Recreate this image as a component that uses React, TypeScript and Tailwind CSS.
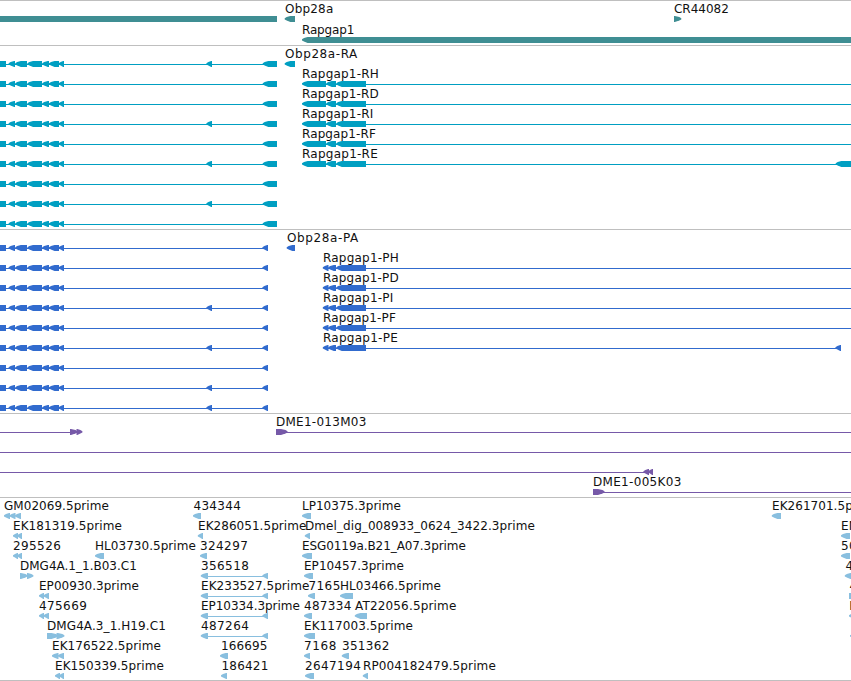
import React from "react";

type Dir = "l" | "r" | "n";
type Exon = [number, number, Dir?];
type Label = [string, number, number];
interface Row {
  labels?: Label[];
  lines?: [number, number][];
  exons?: Exon[];
}

const GENE = "#3f8e93";
const RNA = "#009fc2";
const CDS = "#316bce";
const BAC = "#7659a8";
const EST = "#89bfdf";

function Glyph({ x1, x2, dir, top }: { x1: number; x2: number; dir: Dir; top: number }) {
  if (dir === "n") return <rect x={x1} y={top} width={x2 - x1} height={6} />;
  const head = Math.min(dir === "r" ? 6.5 : 5.6, x2 - x1 - 0.8);
  const s = dir === "l" ? 1 : -1;
  const tip = dir === "l" ? x1 : x2;
  const end = dir === "l" ? x2 : x1;
  const pts = [
    [tip, top + 2.3],
    [tip + s * 2, top + 1.1],
    [tip + s * head, top],
    [end, top],
    [end, top + 6],
    [tip + s * head, top + 6],
    [tip + s * 2, top + 4.6],
    [tip, top + 3.4],
  ];
  return <polygon points={pts.map((p) => p.join(",")).join(" ")} />;
}

function Track({ rows, color, height, pitch = 20 }: { rows: Row[]; color: string; height: number; pitch?: number }) {
  return (
    <section className="border-t border-[#bfbfbf]">
      <svg width={851} height={height} className="block overflow-hidden" fill={color}>
        {rows.map((row, i) => {
          const y = i * pitch;
          return (
            <g key={i}>
              {row.lines?.map(([a, b], k) => (
                <rect key={k} x={a} y={y + 18} width={b - a} height={1} />
              ))}
              {row.exons?.map(([a, b, d], k) => (
                <Glyph key={k} x1={a} x2={b} dir={d ?? "l"} top={y + 15} />
              ))}
              {row.labels?.map(([t, a, b]) => (
                <text key={t} x={a - 0.5} y={y + 12} textLength={b - a + 0.8} fill="#111" className="text-[12px]">
                  {t}
                </text>
              ))}
            </g>
          );
        })}
      </svg>
    </section>
  );
}

const leftExons: Exon[] = [[0, 6, "n"], [8.6, 15], [15.2, 27], [27.4, 42], [42.2, 49], [49, 59], [58.6, 64]];

const genes: Row[] = [
  {
    labels: [["Obp28a", 285.5, 333], ["CR44082", 674.5, 728.5]],
    exons: [[0, 277, "n"], [284.7, 295], [674, 681.3, "r"]],
  },
  { labels: [["Rapgap1", 302.5, 354]], exons: [[302, 860]] },
];

const rnaLabels: Label[] = [
  ["Obp28a-RA", 285.5, 357],
  ["Rapgap1-RH", 302.5, 378.5],
  ["Rapgap1-RD", 302.5, 378.5],
  ["Rapgap1-RI", 302.5, 373],
  ["Rapgap1-RF", 302.5, 375.5],
  ["Rapgap1-RE", 302.5, 377.5],
];

const rnas: Row[] = Array.from({ length: 9 }, (_, i) => {
  const exons: Exon[] = [...leftExons, [262.7, 277]];
  const lines: [number, number][] = [[0, 270]];
  if ([0, 3, 5, 7].includes(i)) exons.push([206.4, 212]);
  if (i === 0) exons.push([284.7, 295]);
  if (i >= 1 && i <= 5) {
    exons.push([302, 326], [326.2, 336], [336.2, 366]);
    lines.push([310, 851]);
  }
  if (i === 5) exons.push([835.7, 860]);
  return { labels: rnaLabels[i] ? [rnaLabels[i]] : [], lines, exons };
});

const cdsLabels: Label[] = [
  ["Obp28a-PA", 287.5, 358],
  ["Rapgap1-PH", 323.5, 398.5],
  ["Rapgap1-PD", 323.5, 398.5],
  ["Rapgap1-PI", 323.5, 393],
  ["Rapgap1-PF", 323.5, 395.5],
  ["Rapgap1-PE", 323.5, 397.5],
];

const proteins: Row[] = Array.from({ length: 9 }, (_, i) => {
  const exons: Exon[] = [...leftExons, [262.4, 268]];
  const lines: [number, number][] = [[0, 265]];
  if ([3, 5, 7, 8].includes(i)) exons.push([206.4, 212]);
  if (i === 0) exons.push([286.7, 295]);
  if (i >= 1 && i <= 5) {
    exons.push([322.8, 328.5], [328.2, 336], [336.2, 366]);
    lines.push([326, i === 5 ? 838 : 851]);
  }
  if (i === 5) exons.push([835.4, 841]);
  return { labels: cdsLabels[i] ? [cdsLabels[i]] : [], lines, exons };
});

const bacs: Row[] = [
  {
    labels: [["DME1-013M03", 276.5, 366]],
    lines: [[0, 78], [280, 851]],
    exons: [[70, 77.5, "r"], [76.5, 82.4, "r"], [276, 287.5, "r"]],
  },
  { lines: [[0, 851]] },
  { lines: [[0, 650]], exons: [[643.4, 649], [648, 653]] },
  { labels: [["DME1-005K03", 593.5, 681]], lines: [[598, 851]], exons: [[593, 604.5, "r"]] },
];

const ests: Row[] = [
  {
    labels: [["GM02069.5prime", 4.5, 108.5], ["434344", 194, 240.5], ["LP10375.3prime", 302.5, 400.5], ["EK261701.5prime", 772.5, 880]],
    exons: [[4, 10], [9.6, 15.5], [15, 21], [193, 201], [302, 311], [771.8, 781]],
  },
  {
    labels: [["EK181319.5prime", 13.5, 121.5], ["EK286051.5prime", 198.5, 306], ["Dmel_dig_008933_0624_3422.3prime", 305.5, 534.5], ["EN09273.5prime", 841.5, 945]],
    exons: [[13, 18], [17, 22], [197.8, 203], [304.8, 310], [841, 850]],
  },
  {
    labels: [["295526", 13.5, 60.5], ["HL03730.5prime", 95.5, 195.5], ["324297", 200.5, 247.5], ["ESG0119a.B21_A07.3prime", 302.5, 465.5], ["500912", 841.5, 888.5]],
    exons: [[13, 18], [17, 22], [95, 104], [200, 207], [302, 312], [841, 850]],
  },
  {
    labels: [["DMG4A.1_1.B03.C1", 20.5, 136.5], ["356518", 201.5, 248.5], ["EP10457.3prime", 304.5, 403.5], ["434021", 846, 892.5]],
    lines: [[205, 265]],
    exons: [[20, 27.5, "r"], [27, 33.4, "r"], [200.8, 208], [262.4, 268], [304, 313], [844.8, 854]],
  },
  {
    labels: [["EP00930.3prime", 39.5, 138.5], ["EK233527.5prime", 201.5, 309], ["7165", 309, 340], ["HL03466.5prime", 340.5, 440.5], ["475102", 850, 897]],
    lines: [[205, 265]],
    exons: [[39, 44], [43.5, 49], [200.8, 208], [262.4, 268], [308, 315], [340, 353], [849, 860, "n"]],
  },
  {
    labels: [["475669", 39.5, 86.5], ["EP10334.3prime", 201.5, 299.5], ["487334", 304.5, 351], ["AT22056.5prime", 355.5, 456], ["EP07215.3prime", 849.7, 950]],
    lines: [[205, 265]],
    exons: [[39, 44], [43.5, 49], [200.8, 208], [262.4, 268], [304, 312], [354.8, 367], [849, 860]],
  },
  {
    labels: [["DMG4A.3_1.H19.C1", 47.5, 165.5], ["487264", 201.5, 248.5], ["EK117003.5prime", 304.5, 412.5]],
    lines: [[205, 265]],
    exons: [[47, 58, "r"], [56.5, 64.4, "r"], [200.8, 208], [262.4, 268], [304, 315], [850, 860]],
  },
  {
    labels: [["EK176522.5prime", 52.5, 160.5], ["166695", 221.5, 267], ["7168", 304.5, 336], ["351362", 342.5, 389]],
    exons: [[52, 58.5], [58, 64], [220, 228], [304, 310], [341.8, 349]],
  },
  {
    labels: [["EK150339.5prime", 55.5, 163.5], ["186421", 222, 268], ["2647194", 305.5, 360.5], ["RP004182479.5prime", 363.5, 495.5]],
    exons: [[55, 60], [59, 64], [221, 227], [305, 314], [362.8, 368]],
  },
];

export default function App() {
  return (
    <main className="flex w-[851px] flex-col overflow-hidden border-b border-[#bfbfbf] bg-white font-['DejaVu_Sans',sans-serif]">
      <Track rows={genes} color={GENE} height={44} pitch={21} />
      <Track rows={rnas} color={RNA} height={183} />
      <Track rows={proteins} color={CDS} height={183} />
      <Track rows={bacs} color={BAC} height={83} />
      <Track rows={ests} color={EST} height={182} />
    </main>
  );
}
